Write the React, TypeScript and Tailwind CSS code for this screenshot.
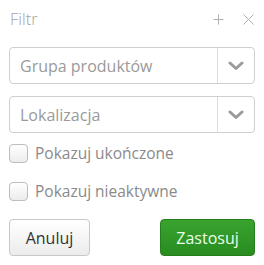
import React from "react";

function Chevron() {
  return (
    <svg width="16" height="10" viewBox="0 0 16 10" className="text-[#9a9a9a]">
      <path d="M2 2 L8 7.5 L14 2" fill="none" stroke="currentColor" strokeWidth="3" strokeLinecap="round" strokeLinejoin="round" />
    </svg>
  );
}

function Select({ label }: { label: string }) {
  return (
    <div className="flex h-[37px] rounded-[4px] border border-[#cfcfcf] bg-white">
      <div className="flex flex-1 items-center pl-[10px] text-[16px] text-[#9a9a9a]">{label}</div>
      <div className="flex w-[37px] items-center justify-center border-l border-[#dcdcdc]">
        <Chevron />
      </div>
    </div>
  );
}

function Check({ label }: { label: string }) {
  return (
    <label className="flex h-[23px] items-center gap-[7px]">
      <span className="h-[19px] w-[19px] rounded-[4px] border border-[#bdbdbd] bg-gradient-to-b from-white to-[#ececec]" />
      <span className="text-[15.5px] text-[#8a8a8a]">{label}</span>
    </label>
  );
}

export default function App() {
  return (
    <div
      className="h-[265px] w-[264px] bg-white px-[9px] pt-[7px]"
      style={{ fontFamily: '"Open Sans", sans-serif' }}
    >
      <div className="flex h-[24px] items-center justify-between pl-px">
        <span className="text-[16.5px] font-light text-[#a3a3a3]">Filtr</span>
        <div className="flex items-center gap-[19px] pr-[1px] text-[#b0b0b0]">
          <svg width="11" height="11" viewBox="0 0 11 11">
            <path d="M5.5 0.5 V10.5 M0.5 5.5 H10.5" stroke="currentColor" strokeWidth="1" />
          </svg>
          <svg width="11" height="11" viewBox="0 0 11 11">
            <path d="M0.5 0.5 L10.5 10.5 M10.5 0.5 L0.5 10.5" stroke="currentColor" strokeWidth="1" />
          </svg>
        </div>
      </div>
      <div className="mt-[16px] flex flex-col gap-[12px]">
        <Select label="Grupa produktów" />
        <Select label="Lokalizacja" />
      </div>
      <div className="mt-[9px] flex flex-col gap-[15px]">
        <Check label="Pokazuj ukończone" />
        <Check label="Pokazuj nieaktywne" />
      </div>
      <div className="mt-[16px] flex justify-between">
        <button className="h-[37px] w-[81px] rounded-[4px] border border-[#c8c8c8] bg-gradient-to-b from-white to-[#ececec] text-[16px] text-[#333]">
          Anuluj
        </button>
        <button className="h-[37px] w-[95px] rounded-[4px] border border-[#23801d] bg-gradient-to-b from-[#3aa32f] to-[#288c20] text-[16px] text-[#eaffe6]">
          Zastosuj
        </button>
      </div>
    </div>
  );
}
